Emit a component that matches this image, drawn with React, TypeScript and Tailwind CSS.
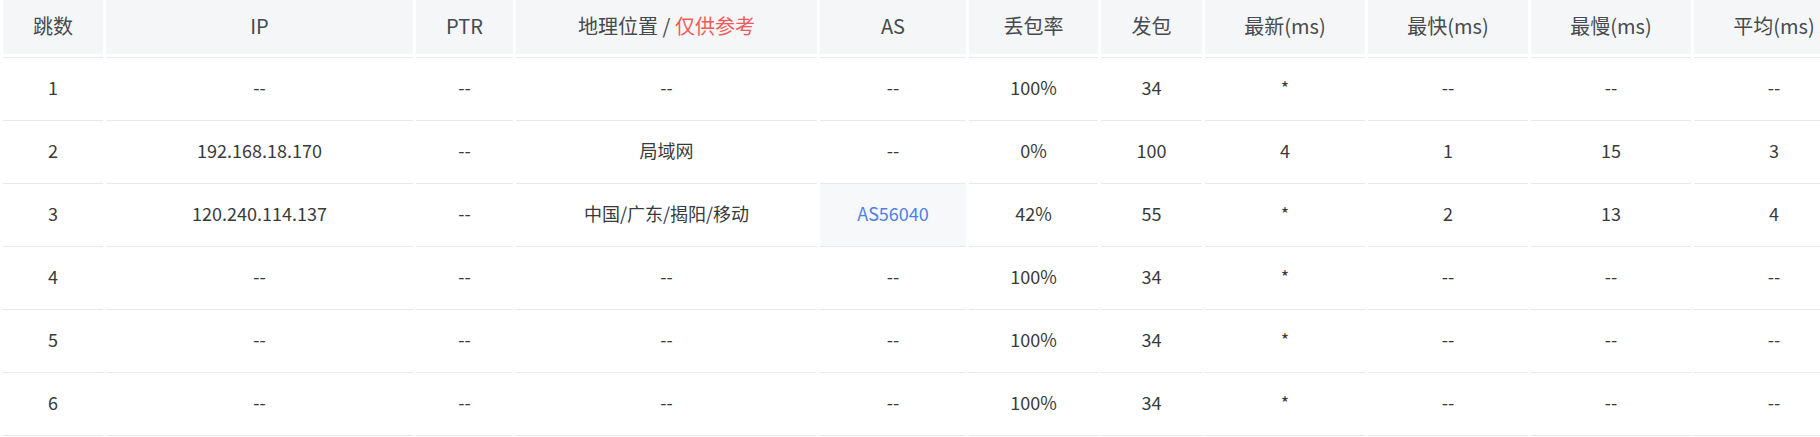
import React from "react";

const widths = ["w-[100px]", "w-[307px]", "w-[97px]", "w-[301px]", "w-[146px]", "w-[129px]", "w-[101px]", "w-[160px]", "w-[160px]", "w-[160px]", "w-[160px]"];

const headers: React.ReactNode[] = [
  "跳数",
  "IP",
  "PTR",
  <span key="geo">
    地理位置 / <span className="text-[#f05a5a]">仅供参考</span>
  </span>,
  "AS",
  "丢包率",
  "发包",
  "最新(ms)",
  "最快(ms)",
  "最慢(ms)",
  "平均(ms)",
];

const rows: string[][] = [
  ["1", "--", "--", "--", "--", "100%", "34", "*", "--", "--", "--"],
  ["2", "192.168.18.170", "--", "局域网", "--", "0%", "100", "4", "1", "15", "3"],
  ["3", "120.240.114.137", "--", "中国/广东/揭阳/移动", "AS56040", "42%", "55", "*", "2", "13", "4"],
  ["4", "--", "--", "--", "--", "100%", "34", "*", "--", "--", "--"],
  ["5", "--", "--", "--", "--", "100%", "34", "*", "--", "--", "--"],
  ["6", "--", "--", "--", "--", "100%", "34", "*", "--", "--", "--"],
];

export default function App() {
  return (
    <div
      className="w-[1820px] h-[437px] overflow-hidden bg-white"
      style={{ fontFamily: '"Noto Sans CJK SC", "Noto Sans", sans-serif' }}
    >
      <div className="flex flex-col w-[1860px]">
        <div className="flex gap-[3px] pl-[3px]">
          {headers.map((h, i) => (
            <div
              key={i}
              className={`${widths[i]} shrink-0 h-[54px] pb-[2px] bg-[#f5f6f7] flex items-center justify-center text-[20px] text-[#464a4e]`}
            >
              {h}
            </div>
          ))}
        </div>
        <div className="flex flex-col mt-[3px]">
          {rows.map((r, ri) => (
            <div key={ri} className="flex gap-[3px] pl-[3px]">
              {r.map((c, ci) => {
                const isAs = c.startsWith("AS");
                return (
                  <div
                    key={ci}
                    className={`${widths[ci]} shrink-0 ${ri === 0 ? "h-[64px] border-t" : "h-[63px]"} pb-[4px] border-b border-[#e6e9ec] flex items-center justify-center text-[18px] ${isAs ? "bg-[#f7f8fa] text-[#4f7fe6]" : "text-[#3a3a3a]"}`}
                  >
                    {c}
                  </div>
                );
              })}
            </div>
          ))}
        </div>
      </div>
    </div>
  );
}
